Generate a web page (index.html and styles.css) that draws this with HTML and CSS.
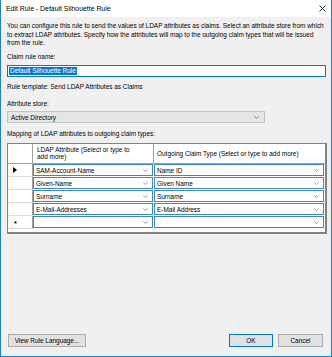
FILE: index.html
```html
<!DOCTYPE html>
<html lang="en">
<head>
    <meta charset="UTF-8">
    <title>Edit Rule - Default Silhouette Rule</title>
    <link rel="stylesheet" href="styles.css">
</head>
<body>

<div class="dialog">
    <div class="titlebar">
        <span class="title">Edit Rule - Default Silhouette Rule</span>
        <svg class="close" width="7" height="7" viewBox="0 0 7 7">
            <path d="M0.5 0.5 L6.5 6.5 M6.5 0.5 L0.5 6.5" stroke="#000" stroke-width="0.8" fill="none"/>
        </svg>
    </div>

    <div class="content">
        <p class="intro">You can configure this rule to send the values of LDAP attributes as claims. Select an attribute store from which to extract LDAP attributes. Specify how the attributes will map to the outgoing claim types that will be issued from the rule.</p>

        <div class="label label-first">Claim rule name:</div>
        <div class="textbox"><span class="selected">Default Silhouette Rule</span></div>

        <div class="label label-template">Rule template: Send LDAP Attributes as Claims</div>

        <div class="label label-store">Attribute store:</div>
        <div class="dropdown">
            <span>Active Directory</span>
            <svg class="chevron" width="5" height="3" viewBox="0 0 5 3"><path d="M0.3 0.3 L2.5 2.6 L4.7 0.3" stroke="#666" stroke-width="0.7" fill="none"/></svg>
        </div>

        <div class="label label-mapping">Mapping of LDAP attributes to outgoing claim types:</div>

        <div class="grid" id="mappingGrid">
            <div class="row-head head-cell"></div>
            <div class="col-head">LDAP Attribute (Select or type to add more)</div>
            <div class="col-head col-head-last">Outgoing Claim Type (Select or type to add more)</div>
        </div>

        <div class="footer">
            <button class="btn btn-wide">View Rule Language...</button>
            <div class="footer-right">
                <button class="btn btn-default">OK</button>
                <button class="btn">Cancel</button>
            </div>
        </div>
    </div>
</div>

<script>
    const mappings = [
        { ldap: 'SAM-Account-Name', claim: 'Name ID', current: true },
        { ldap: 'Given-Name', claim: 'Given Name' },
        { ldap: 'Surname', claim: 'Surname' },
        { ldap: 'E-Mail-Addresses', claim: 'E-Mail Address' },
        { ldap: '', claim: '', isNew: true }
    ];

    const chevron = '<svg class="chevron" width="5" height="3" viewBox="0 0 5 3"><path d="M0.3 0.3 L2.5 2.6 L4.7 0.3" stroke="#777" stroke-width="0.7" fill="none"/></svg>';

    function renderGrid() {
        const grid = document.getElementById('mappingGrid');

        mappings.forEach(row => {
            const head = document.createElement('div');
            head.classList.add('row-head');
            if (row.current) {
                head.innerHTML = '<svg width="4" height="6" viewBox="0 0 4 6"><polygon points="0,0 4,3 0,6" fill="#000"/></svg>';
            } else if (row.isNew) {
                head.innerHTML = '<span class="new-mark">*</span>';
            }
            grid.appendChild(head);

            [row.ldap, row.claim].forEach(value => {
                const cell = document.createElement('div');
                cell.classList.add('cell');
                cell.innerHTML = `<div class="cell-combo"><span>${value}</span>${chevron}</div>`;
                grid.appendChild(cell);
            });
        });
    }

    renderGrid();
</script>

</body>
</html>
```

FILE: styles.css
```css
* {
    box-sizing: border-box;
}
body {
    margin: 0;
    font-family: 'Liberation Sans', Arial, sans-serif;
    font-size: 6.45px;
    color: #000;
    background: #fff;
}
.dialog {
    width: 332px;
    height: 357px;
    background: #f0f0f0;
    border: 1px solid #1a83d6;
    border-top: none;
    display: flex;
    flex-direction: column;
}
.titlebar {
    height: 17px;
    background: #fff;
    display: flex;
    align-items: center;
    justify-content: space-between;
    padding: 0 5px 0 5px;
}
.title {
    font-size: 6.9px;
}
.content {
    flex: 1;
    display: flex;
    flex-direction: column;
    padding: 5px 5px 9px 6px;
}
.intro {
    margin: 0;
    line-height: 8.7px;
}
.label {
    line-height: 8.7px;
}
.label-first {
    margin-top: 5px;
}
.label-template {
    margin-top: 5.5px;
}
.label-store {
    margin-top: 8px;
}
.label-mapping {
    margin-top: 7px;
}
.textbox {
    margin-top: 3.5px;
    height: 12px;
    background: #fff;
    border: 1px solid #0078d7;
    padding: 1px 1px;
    display: flex;
}
.selected {
    background: #0078d7;
    color: #fff;
    padding: 0 1px;
    line-height: 8px;
}
.dropdown {
    margin-top: 3px;
    width: 258px;
    height: 12px;
    background: #e5e5e5;
    border: 1px solid #c4c4c4;
    display: flex;
    align-items: center;
    justify-content: space-between;
    padding: 0 5px 0 3px;
}
.grid {
    margin-top: 4.5px;
    margin-right: -1px;
    display: grid;
    grid-template-columns: 25px 121px 1fr;
    grid-template-rows: 20px repeat(5, 13px);
    background: #fff;
    border: 1px solid #828282;
    border-right-width: 2px;
    border-bottom-width: 2px;
    padding-bottom: 2px;
    height: 91px;
}
.row-head {
    border-right: 1px solid #a0a0a0;
    border-bottom: 1px solid #dcdcdc;
    display: flex;
    align-items: center;
    padding-left: 5px;
}
.head-cell {
    border-bottom: 1px solid #a0a0a0;
}
.col-head {
    border-right: 1px solid #a0a0a0;
    border-bottom: 1px solid #a0a0a0;
    display: flex;
    align-items: center;
    padding: 0 14px 0 4px;
    line-height: 6.5px;
}
.col-head-last {
    border-right: none;
    padding-left: 3px;
}
.new-mark {
    font-weight: bold;
    font-size: 7px;
    margin-left: 1px;
    margin-top: 2px;
}
.cell {
    padding: 0 1px 1px 0;
}
.cell-combo {
    height: 100%;
    border: 1px solid #3a86d4;
    display: flex;
    align-items: center;
    justify-content: space-between;
    padding: 0 4px 0 2px;
}
.footer {
    margin-top: auto;
    display: flex;
    justify-content: space-between;
    padding: 0 3px 0 1px;
}
.footer-right {
    display: flex;
    gap: 5px;
}
.btn {
    font-family: 'Liberation Sans', Arial, sans-serif;
    font-size: 6.45px;
    height: 13.5px;
    width: 45px;
    padding: 0;
    background: #e1e1e1;
    border: 1px solid #adadad;
    color: #000;
}
.btn-wide {
    width: 78px;
}
.btn-default {
    width: 44px;
    border-color: #0078d7;
}
```
